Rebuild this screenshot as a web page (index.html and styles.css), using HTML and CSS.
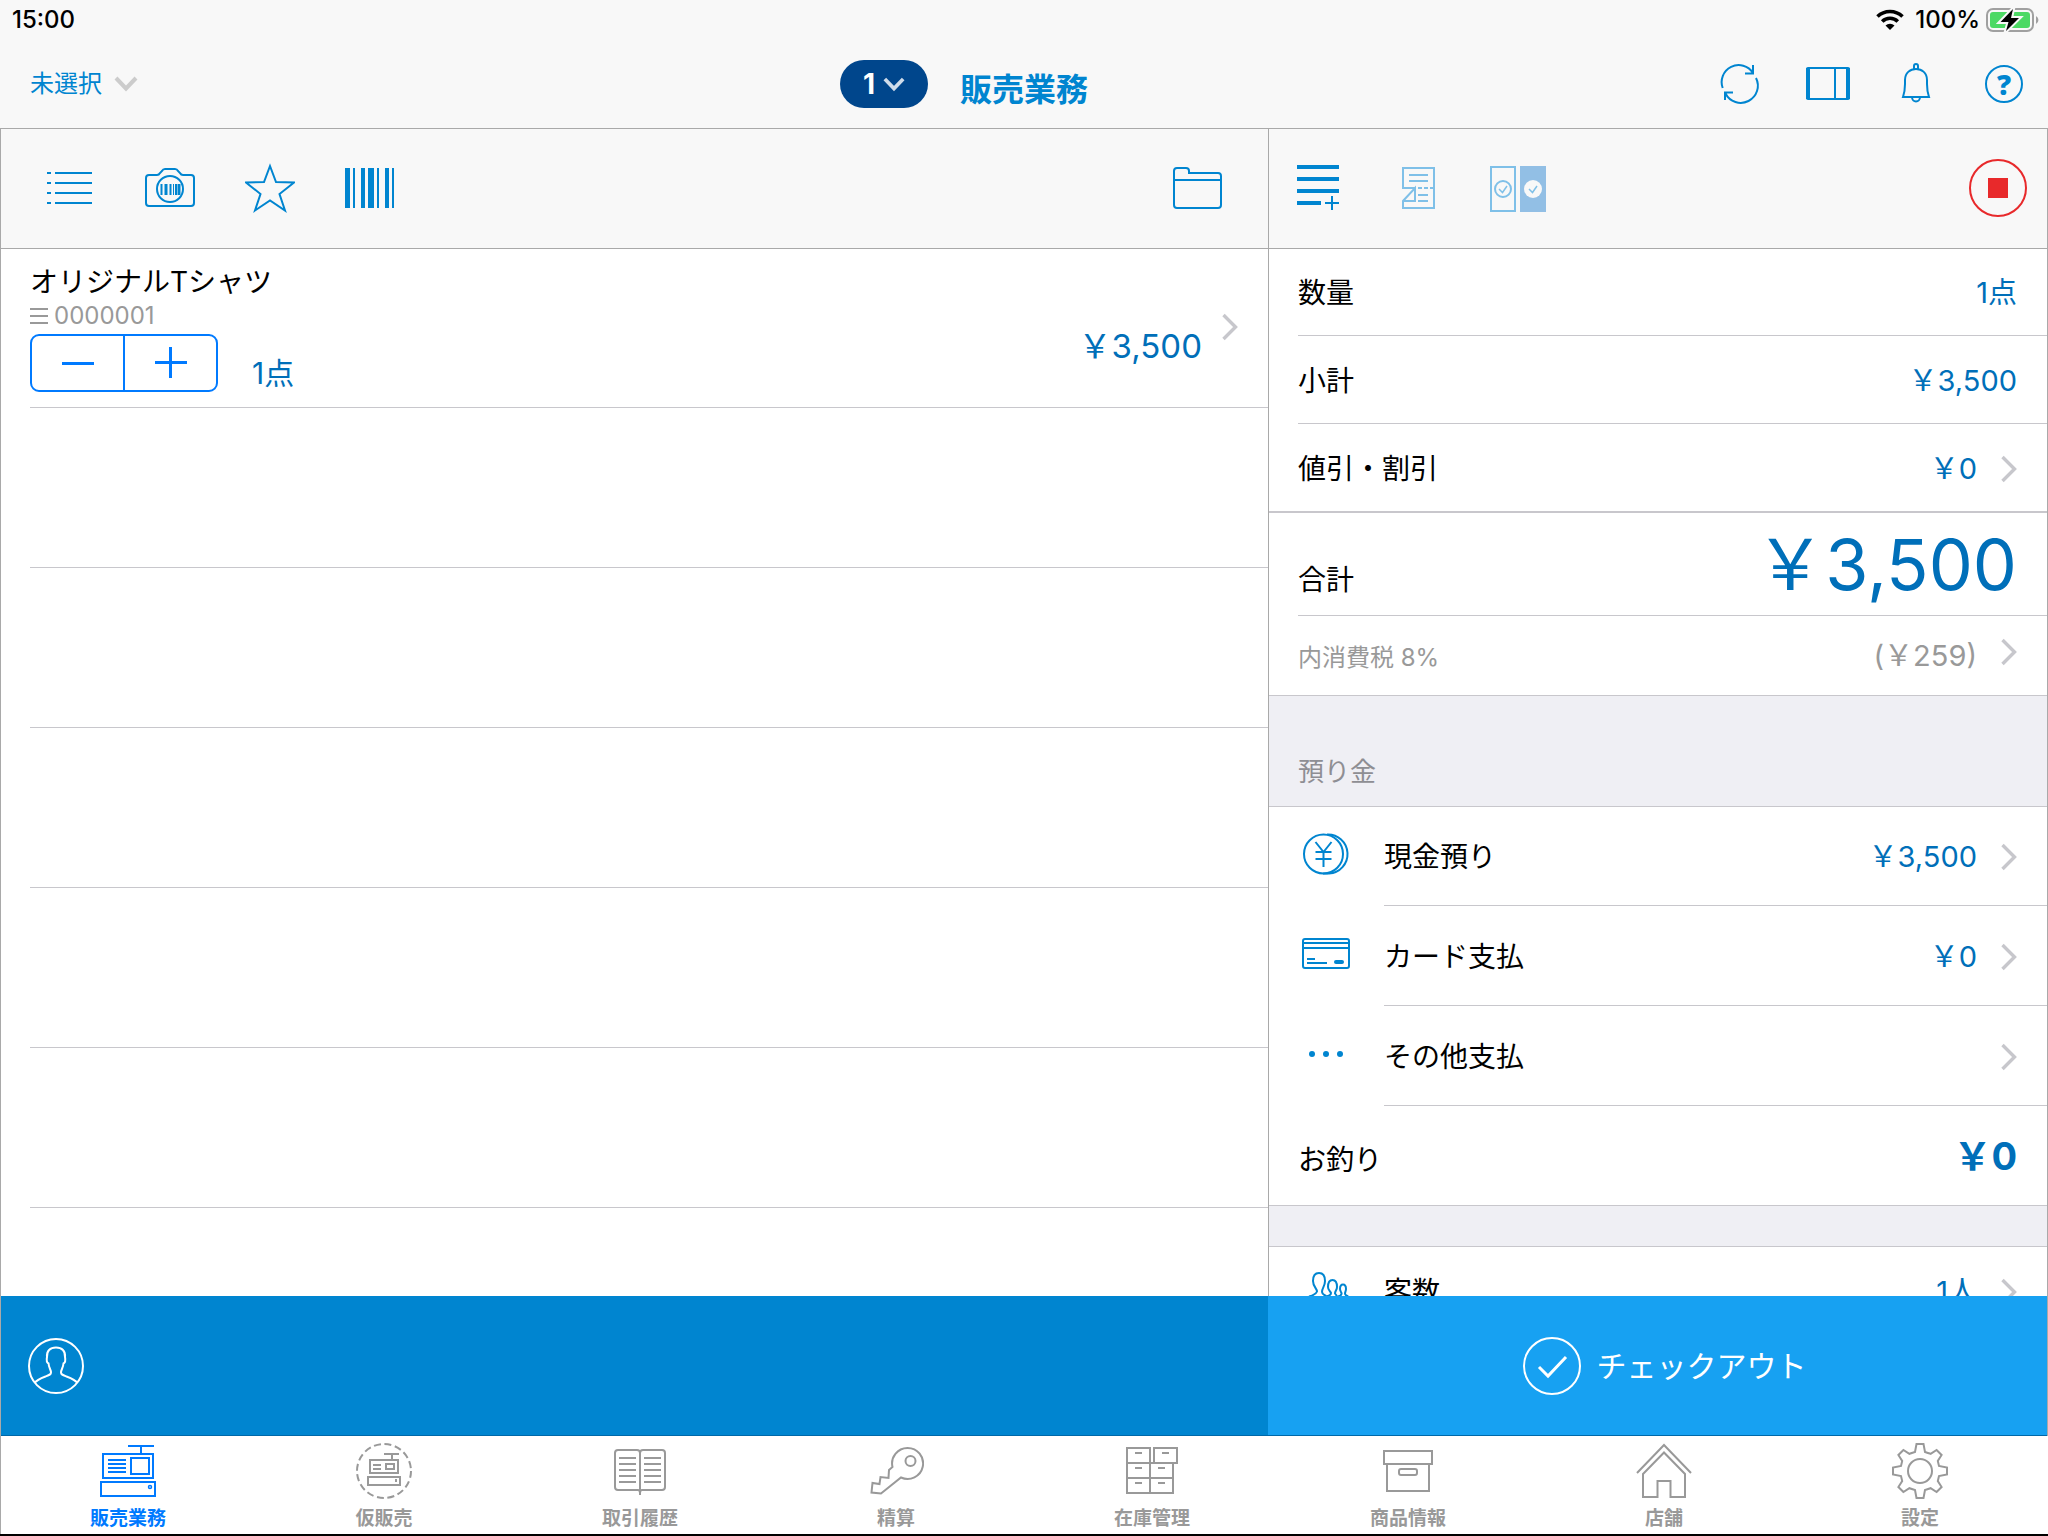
FILE: index.html
```html
<!DOCTYPE html>
<html lang="ja">
<head>
<meta charset="utf-8">
<meta name="viewport" content="width=device-width, initial-scale=1">
<title>販売業務</title>
<link rel="stylesheet" href="styles.css">
</head>
<body>
<svg class="defs" width="0" height="0" aria-hidden="true">
  <symbol id="chevron" viewBox="0 0 16 28"><path d="M1.500 2l12 12-12 12" fill="none" stroke="currentColor" stroke-width="3.400"/></symbol>
  <symbol id="chevron-down" viewBox="0 0 24 16"><path d="M2 2l10 10.500L22 2" fill="none" stroke="currentColor" stroke-width="4"/></symbol>
</svg>
<div class="app">
  <header class="header">
    <div class="status">
      <span class="status__time">15:00</span>
      <span class="status__right">
        <svg width="30" height="22" viewBox="0 0 30 22" aria-hidden="true"><path d="M2.500 7.500a18 18 0 0 1 25 0M7.200 12.500a11 11 0 0 1 15.600 0" fill="none" stroke="#000" stroke-width="3.600"/><path d="M15 21l-4.500-4.500a6.400 6.400 0 0 1 9 0z"/></svg>
        <span>100%</span>
        <svg width="54" height="26" viewBox="0 0 54 26" aria-hidden="true"><rect x="1" y="2" width="46" height="22" rx="6" fill="none" stroke="#a0a0a0" stroke-width="2"/><rect x="4" y="5" width="40" height="16" rx="3" fill="#4cd964"/><path d="M50 9a4.500 4.500 0 0 1 0 8z" fill="#a0a0a0"/><path d="M27 2L14.500 15h8L20 24l13-13h-8z" fill="#000" stroke="#f8f8f8" stroke-width="4" paint-order="stroke"/></svg>
      </span>
    </div>
    <nav class="nav">
      <button class="nav__picker">未選択<svg width="24" height="16"><use href="#chevron-down"/></svg></button>
      <div class="nav__center">
        <button class="pill">1<svg width="22" height="15"><use href="#chevron-down"/></svg></button>
        <h1 class="nav__title">販売業務</h1>
      </div>
      <div class="nav__actions">
        <button class="icon-btn" aria-label="更新"><svg width="44" height="44" viewBox="1 1 44 44"><path d="M5.700 27A17 17 0 0 1 36 12M36 4v8.500h-8M39 17A17 17 0 0 1 8.500 32.500M8 39v-7.500h8"/></svg></button>
        <button class="icon-btn" aria-label="画面分割"><svg width="44" height="44" viewBox="0 0 44 44"><rect x="1" y="6" width="42" height="31" rx="1"/><path d="M2 6v31M42 6v31" stroke-width="4"/><path d="M29 6v31"/></svg></button>
        <button class="icon-btn" aria-label="通知"><svg width="44" height="44" viewBox="0 0 44 44"><path d="M20 7V4a2 2 0 0 1 4 0v3M11 22v-4c0-7 5-11 11-11s11 4 11 11v4c0 6 1 10 2 13H9c1-3 2-7 2-13zM18 35c0 6 8 6 8 0"/></svg></button>
        <button class="icon-btn help" aria-label="ヘルプ">?</button>
      </div>
    </nav>
  </header>

  <div class="panes">
    <main class="pane pane--left">
      <div class="toolbar">
        <button class="icon-btn" aria-label="一覧"><svg width="50" height="50" viewBox="0 0 50 50"><path d="M2 10h4M10 10h37M2 20h4M10 20h37M2 30h4M10 30h37M2 40h4M10 40h37"/></svg></button>
        <button class="icon-btn" aria-label="カメラ"><svg width="50" height="50" viewBox="0 0 50 50"><path d="M4 12h8q2 0 3-2l2-2q1-2 3-2h10q2 0 3 2l2 2q1 2 3 2h8q3 0 3 3v25q0 3-3 3H4q-3 0-3-3V15q0-3 3-3z"/><circle cx="25" cy="26" r="13"/><path d="M16.500 21v11M25.500 21v11M31 21v11" stroke-width="2"/><path d="M21 21v11M34 21v11" stroke-width="3"/><path d="M28.500 21v11" stroke-width="1"/></svg></button>
        <button class="icon-btn" aria-label="お気に入り"><svg width="50" height="50" viewBox="0 0 50 50"><path d="M25 3l6 16 18 .5-14.500 11.500 5.500 16.500L25 37.500 10 47.500 15.500 31 1 19.500 19 19z"/></svg></button>
        <button class="icon-btn" aria-label="バーコード"><svg class="solid" width="50" height="50" viewBox="0 0 50 50"><path d="M0 5h5v40H0zM8 5h2v40H8zM16 5h4v40h-4zM23 5h6v40h-6zM32 5h2v40h-2zM40 5h4v40h-4zM47 5h2v40h-2z"/></svg></button>
        <button class="icon-btn toolbar__end" aria-label="フォルダ"><svg width="50" height="50" viewBox="0 0 50 50"><path d="M2 17V8q0-3 3-3h9q3 0 3 3v2h29q3 0 3 3v29q0 3-3 3H5q-3 0-3-3V17h47"/></svg></button>
      </div>
      <ul class="cart">
        <li class="item">
          <div class="item__info">
            <div class="item__name">オリジナルTシャツ</div>
            <div class="item__code"><svg width="18" height="18" viewBox="0 0 18 18"><path d="M0 2h18M0 9h18M0 16h18" stroke="currentColor" stroke-width="2"/></svg>0000001</div>
            <div class="item__qty">
              <div class="stepper">
                <button aria-label="減らす"><svg width="32" height="32" viewBox="0 0 32 32"><path d="M0 16.500h32" stroke="currentColor" stroke-width="3"/></svg></button>
                <button aria-label="増やす"><svg width="32" height="32" viewBox="0 0 32 32"><path d="M0 15.500h32M15.500 0v31" stroke="currentColor" stroke-width="3"/></svg></button>
              </div>
              <span class="item__count">1点</span>
            </div>
          </div>
          <span class="item__price">￥3,500</span>
          <svg class="item__chevron" width="16" height="28"><use href="#chevron"/></svg>
        </li>
        <li class="empty"></li><li class="empty"></li><li class="empty"></li><li class="empty"></li><li class="empty"></li>
      </ul>
    </main>

    <aside class="pane pane--right">
      <div class="toolbar toolbar--right">
        <button class="icon-btn" aria-label="行追加"><svg width="50" height="50" viewBox="0 0 50 50"><path d="M4 4h42M4 16h42M4 28h42M4 40h24" stroke-width="4"/><path d="M32 40h14M39 33v14"/></svg></button>
        <button class="icon-btn faded" aria-label="レシート" disabled><svg width="50" height="50" viewBox="0 0 50 50"><path d="M22 25H10V5h31v40H10v-7l12-13v13H10M16 12h19M16 18h19M25 32h10M25 38h10M25 25h4M31 25h4M37 25h4"/></svg></button>
        <button class="icon-btn faded" aria-label="表示切替" disabled><svg width="56" height="50" viewBox="0 0 56 50"><rect x="1" y="4" width="24" height="44"/><circle cx="13" cy="26" r="8"/><path d="M9 26l3.500 3.500L17 23" stroke-width="1.500"/><path d="M30 3h26v46H30z" fill="#92bfe5" stroke="none"/><circle cx="43" cy="26" r="9" fill="#f8f8f8" stroke="none"/><path d="M39 26l3.500 3.500L47 23" stroke-width="1.500"/></svg></button>
        <button class="icon-btn stop toolbar__end" aria-label="中止"><svg width="58" height="58" viewBox="0 0 58 58"><circle cx="29" cy="29" r="28"/><path d="M19 19h20v20H19z" fill="#e8292b" stroke="none"/></svg></button>
      </div>
      <div class="summary">
        <div class="row row--first"><div class="row__body"><span>数量</span><span class="value">1点</span></div></div>
        <div class="row"><div class="row__body"><span>小計</span><span class="value">￥3,500</span></div></div>
        <div class="row row--last"><div class="row__body"><span>値引・割引</span><span class="value">￥0</span><svg class="chev" width="16" height="28"><use href="#chevron"/></svg></div></div>
        <div class="row row--total"><div class="row__body"><span>合計</span><span class="value value--big">￥3,500</span></div></div>
        <div class="row row--tax"><div class="row__body"><span>内消費税 8%</span><span class="value">(￥259)</span><svg class="chev" width="16" height="28"><use href="#chevron"/></svg></div></div>
        <h2 class="band">預り金</h2>
        <div class="row row--pay row--pay-first"><svg class="row__icon" width="56" height="50" viewBox="0 0 56 50"><circle cx="25.500" cy="22" r="19.500"/><path d="M29 2.500a19.500 19.500 0 0 1 2 39l-6 0M17.500 10l8 10 8-10M25.500 20v15M17.500 20h16M17.500 27h16"/></svg><div class="row__body"><span>現金預り</span><span class="value">￥3,500</span><svg class="chev" width="16" height="28"><use href="#chevron"/></svg></div></div>
        <div class="row row--pay"><svg class="row__icon" width="56" height="48" viewBox="0 0 56 48"><rect x="5" y="7" width="46" height="29" rx="2"/><path d="M5 11h46M5 16h46M9 27h8M9 31h20" /><path d="M38 30h6" stroke-width="4" stroke-linecap="round"/></svg><div class="row__body"><span>カード支払</span><span class="value">￥0</span><svg class="chev" width="16" height="28"><use href="#chevron"/></svg></div></div>
        <div class="row row--pay"><svg class="row__icon solid" width="56" height="48" viewBox="0 0 56 48"><circle cx="14" cy="22" r="3"/><circle cx="28" cy="22" r="3"/><circle cx="42" cy="22" r="3"/></svg><div class="row__body"><span>その他支払</span><svg class="chev" width="16" height="28"><use href="#chevron"/></svg></div></div>
        <div class="row row--change"><span>お釣り</span><span class="value value--change">￥0</span></div>
        <div class="band band--thin"></div>
        <div class="row"><svg class="row__icon" width="56" height="48" viewBox="0 0 56 48"><path d="M11 29.500q7-2 8-5c0-3-4-5-4-10.500 0-6 2-8 6-8s6 2 6 8c0 5.500-3 7-3 11q0 2 4 4M28 29.500q5-1 5-3.500c-1-2-3-3-3-6 0-5 2-7 4.500-7s4.500 2 4.500 7c0 3-2 4-2 6.500l2 2.500M40 29.500q4-1 3.500-3.500c-1-2-1.500-2.500-1.500-4 0-3 1-4.500 3-4.500s3 1.500 3 4.500c0 2-1 3-1 4.500 0 2 2 2 3 3"/></svg><div class="row__body"><span>客数</span><span class="value">1人</span><svg class="chev" width="16" height="28"><use href="#chevron"/></svg></div></div>
      </div>
    </aside>
  </div>

  <div class="actions">
    <div class="actions__staff"><button aria-label="担当者"><svg width="56" height="56" viewBox="0 0 56 56"><circle cx="28" cy="28" r="27"/><path d="M6.500 45c2-3 7-5 11-6.500 4-1.500 5.500-2 5.500-4 0-3-2-4-2.500-9-2-1-2-4-1.500-6.500-.500-6 3-9.500 9-9.500s9.500 3.500 9 9.500c.500 2.500.500 5.500-1.500 6.500-.500 5-2.500 6-2.500 9 0 2 1.500 2.500 5.500 4 4 1.500 9 3.500 11 6.500"/></svg></button></div>
    <button class="actions__checkout"><svg width="58" height="58" viewBox="0 0 58 58"><circle cx="29" cy="29" r="28"/><path d="M16 30l9 9L43 20" stroke-width="3"/></svg>チェックアウト</button>
  </div>

  <nav class="tabs">
    <a href="#sales" class="tab tab--active"><svg width="56" height="56" viewBox="0 0 56 56"><path d="M28 3h26M41 4v7M8 17h18M8 21h18M8 25h18M8 29h18"/><rect x="3" y="11" width="50" height="24"/><rect x="31" y="15" width="18" height="16"/><rect x="1" y="39" width="54" height="14"/><circle cx="50" cy="44" r="1.500" stroke-width="1.500"/></svg>販売業務</a>
    <a href="#hold" class="tab"><svg width="56" height="56" viewBox="0 0 56 56"><circle cx="28" cy="28" r="27" stroke-dasharray="7 3.600"/><path d="M28 11h15M36 11v6M17 22h8M17 26h8"/><rect x="14" y="17" width="28" height="13"/><rect x="30" y="21" width="8" height="5"/><rect x="12" y="34" width="32" height="8"/><path d="M40 36v3"/></svg>仮販売</a>
    <a href="#history" class="tab"><svg width="56" height="56" viewBox="0 0 56 56"><path d="M28 52V10q0-3-3-3H6q-3 0-3 3v34q0 3 3 3h20q2 0 2 3 0-3 2-3h20q3 0 3-3V10q0-3-3-3H31q-3 0-3 3M7 15h17M7 21h17M7 27h17M7 33h17M7 39h17M32 15h17M32 21h17M32 27h17M32 33h17M32 39h17"/></svg>取引履歴</a>
    <a href="#settle" class="tab"><svg width="56" height="56" viewBox="0 0 56 56"><path d="M24.500 24A15.500 15.500 0 1 1 33 34.500L13 50.500 3.500 49.500l1-9.500 7 1 1-7 8 1 .5-8z"/><circle cx="42.500" cy="18" r="5"/></svg>精算</a>
    <a href="#stock" class="tab"><svg width="56" height="56" viewBox="0 0 56 56"><path d="M3 5h23v45H3zM30 5h23v15H30zM26 20h23v30H26M3 20h23M3 35h46M11 10h7M38 10h7M11 25h7M34 25h7M11 40h7M34 40h7"/></svg>在庫管理</a>
    <a href="#products" class="tab"><svg width="56" height="56" viewBox="0 0 56 56"><path d="M4 8h48v13H4zM7 21v27h42V21"/><rect x="19" y="26" width="18" height="6" rx="2"/></svg>商品情報</a>
    <a href="#store" class="tab"><svg width="56" height="56" viewBox="0 0 56 56"><path d="M1 30L28 2l27 28M7 31L28 9.500 49 31v23H34.500V38h-13v16H7z"/></svg>店舗</a>
    <a href="#settings" class="tab"><svg width="56" height="56" viewBox="-28 -28 56 56"><circle r="12"/><path d="M-3.500-27h7l1.500 8q3 1 5.600 1.800l6-3.800 5 5-3.800 6 1.200 5 8 1.500v7l-8 1.500-1.200 5 3.800 6-5 5-6-3.800-5.600 1.800-1.500 8h-7L-5 19l-5.600-1.800-6 3.800-5-5 3.800-6-1.200-5-8-1.500v-7l8-1.500 1.200-5-3.800-6 5-5 6 3.800L-5-19z"/></svg>設定</a>
  </nav>
</div>
</body>
</html>
```
FILE: styles.css
```css
:root {
  --blue: #0085d0;
  --value: #006fb9;
  --ios: #007aff;
  --edge: #a9a9a9;
  --line: #c8c7cc;
  --bar: #f8f8f8;
  --gray: #999;
  --chev: #c7c7cc;
}
* { box-sizing: border-box; }
body {
  margin: 0;
  font-family: Inter, "Noto Sans CJK JP", sans-serif;
  font-size: 28px;
  line-height: 36px;
  color: #000;
  background: #fff;
}
button {
  margin: 0; padding: 0; border: 0;
  background: none; font: inherit; color: inherit; cursor: pointer;
}
ul, h1, h2 { margin: 0; padding: 0; list-style: none; font-weight: inherit; }
svg { display: block; flex: none; }
.defs { position: absolute; }

.app {
  display: flex; flex-direction: column;
  height: 100vh;
  border-bottom: 2px solid #000;
}

/* header */
.header { background: var(--bar); border-bottom: 1px solid var(--edge); }
.status {
  display: flex; justify-content: space-between; align-items: center;
  height: 40px; padding: 0 8px 0 12px;
  font-size: 24px; line-height: 32px; font-weight: 500;
}
.status__right { display: flex; align-items: center; gap: 10px; }
.status__right span { margin-right: -4px; }
.nav {
  display: grid; grid-template-columns: 1fr auto 1fr; align-items: center;
  height: 88px; padding: 0 22px 0 30px;
}
.nav__picker {
  display: flex; align-items: center; gap: 12px; justify-self: start;
  font-size: 24px; color: var(--blue);
}
.nav__picker svg { color: #ccc; }
.nav__center { display: flex; align-items: flex-end; gap: 32px; margin-left: -128px; }
.pill {
  display: flex; align-items: center; justify-content: center; gap: 8px;
  width: 88px; height: 48px; border-radius: 24px;
  background: #00468c; color: #fff; font-weight: 700;
}
.pill svg { color: #cfdcea; }
.nav__title { font-size: 32px; font-weight: 700; color: var(--blue); }
.nav__actions { display: flex; gap: 44px; justify-self: end; }
.icon-btn { color: var(--blue); }
.icon-btn svg, .row__icon, .tab svg, .actions svg {
  fill: none; stroke: currentColor; stroke-width: 2;
}
.icon-btn .solid, .row__icon.solid { fill: currentColor; stroke: none; }
.help {
  width: 38px; height: 38px; margin: 3px;
  border: 2px solid; border-radius: 50%;
  font: 800 28px/34px "Open Sans", sans-serif;
}

/* panes */
.panes {
  display: grid; grid-template-columns: 1268fr 778fr;
  flex: 1; min-height: 0;
  border-left: 1px solid var(--edge); border-right: 1px solid var(--edge);
}
.pane { display: flex; flex-direction: column; min-height: 0; overflow: hidden; }
.pane--left { border-right: 1px solid var(--edge); }
.toolbar {
  display: flex; align-items: center; gap: 50px; flex: none;
  height: 120px; padding: 0 46px 1px 44px;
  background: var(--bar); border-bottom: 1px solid var(--edge);
}
.toolbar--right { padding: 0 20px 1px 24px; }
.toolbar--right .faded + .faded { margin-left: -3px; }
.toolbar__end { margin-left: auto; }
.faded { color: #7fc0e8; }
.stop { color: #e8292b; }

/* cart */
.item, .empty { margin-left: 29px; border-bottom: 1px solid var(--line); }
.item { display: flex; height: 159px; padding: 15px 30px 0 0; }
.empty { height: 160px; }
.item__info { flex: 1; }
.item__code {
  display: flex; align-items: center; gap: 6px;
  font-size: 24px; line-height: 32px; color: var(--gray);
}
.item__qty { display: flex; align-items: center; gap: 34px; margin-top: 2px; }
.stepper {
  display: flex; width: 188px; height: 58px;
  border: 2px solid var(--ios); border-radius: 9px; color: var(--ios);
}
.stepper button { flex: 1; display: grid; place-items: center; }
.stepper button + button { border-left: 2px solid var(--ios); }
.item__count { padding-top: 20px; font-size: 30px; color: var(--value); }
.item__price { padding-top: 64px; font-size: 33px; color: var(--value); }
.item__chevron { margin: 49px 0 0 20px; color: var(--chev); }

/* summary */
.row { display: flex; align-items: center; height: 88px; padding-left: 29px; }
.row__body {
  display: flex; align-items: center; flex: 1; align-self: stretch;
  padding: 2px 30px 0 0; border-bottom: 1px solid var(--line);
}
.row--first { height: 87px; }
.row--last { height: 89px; border-bottom: 2px solid var(--line); }
.row--last .row__body, .row--tax .row__body { border-bottom: 0; }
.row--total { height: 103px; }
.row--total .row__body { align-items: baseline; padding-top: 10px; }
.row--tax { height: 80px; font-size: 24px; color: var(--gray); border-bottom: 1px solid var(--line); }
.row--tax .row__body { align-items: baseline; padding-top: 22px; }
.row--pay { height: 100px; }
.row--pay-first { height: 99px; }
.row__icon { color: var(--blue); margin-right: 30px; }
.row--change {
  align-items: baseline;
  height: 100px; padding: 32px 30px 0 29px; border-bottom: 1px solid var(--line);
}
.value { margin-left: auto; font-size: 29px; color: var(--value); }
.value--big { font-size: 70px; line-height: 84px; }
.value--change { font-size: 38px; font-weight: 700; }
.row--tax .value { color: var(--gray); }
.chev { margin-left: auto; color: var(--chev); }
.value + .chev { margin-left: 24px; }
.band {
  display: flex; align-items: flex-end;
  height: 111px; padding: 0 29px 16px;
  background: #efeff4; border-bottom: 1px solid var(--line);
  font-size: 26px; color: #8e8e93;
}
.band--thin { height: 41px; padding: 0; }

/* bottom action bar */
.actions {
  display: grid; grid-template-columns: 1267fr 779fr; flex: none;
  height: 140px; color: #fff;
  border-left: 1px solid var(--edge); border-right: 1px solid var(--edge);
}
.actions > * { border-bottom: 1px solid #0068a8; }
.actions__staff { display: flex; align-items: center; padding-left: 27px; background: #0085d0; }
.actions__checkout {
  display: flex; align-items: center; justify-content: center; gap: 16px;
  padding-left: 14px;
  background: #17a1f2; font-size: 30px;
}

/* tab bar */
.tabs { display: flex; flex: none; height: 98px; box-shadow: inset 1px 0 var(--edge); }
.tab {
  display: flex; flex: 1; flex-direction: column; align-items: center; gap: 6px;
  padding-top: 7px;
  font-size: 19px; line-height: 28px; font-weight: 700;
  color: var(--gray); text-decoration: none;
}
.tab--active { color: var(--ios); }
```
